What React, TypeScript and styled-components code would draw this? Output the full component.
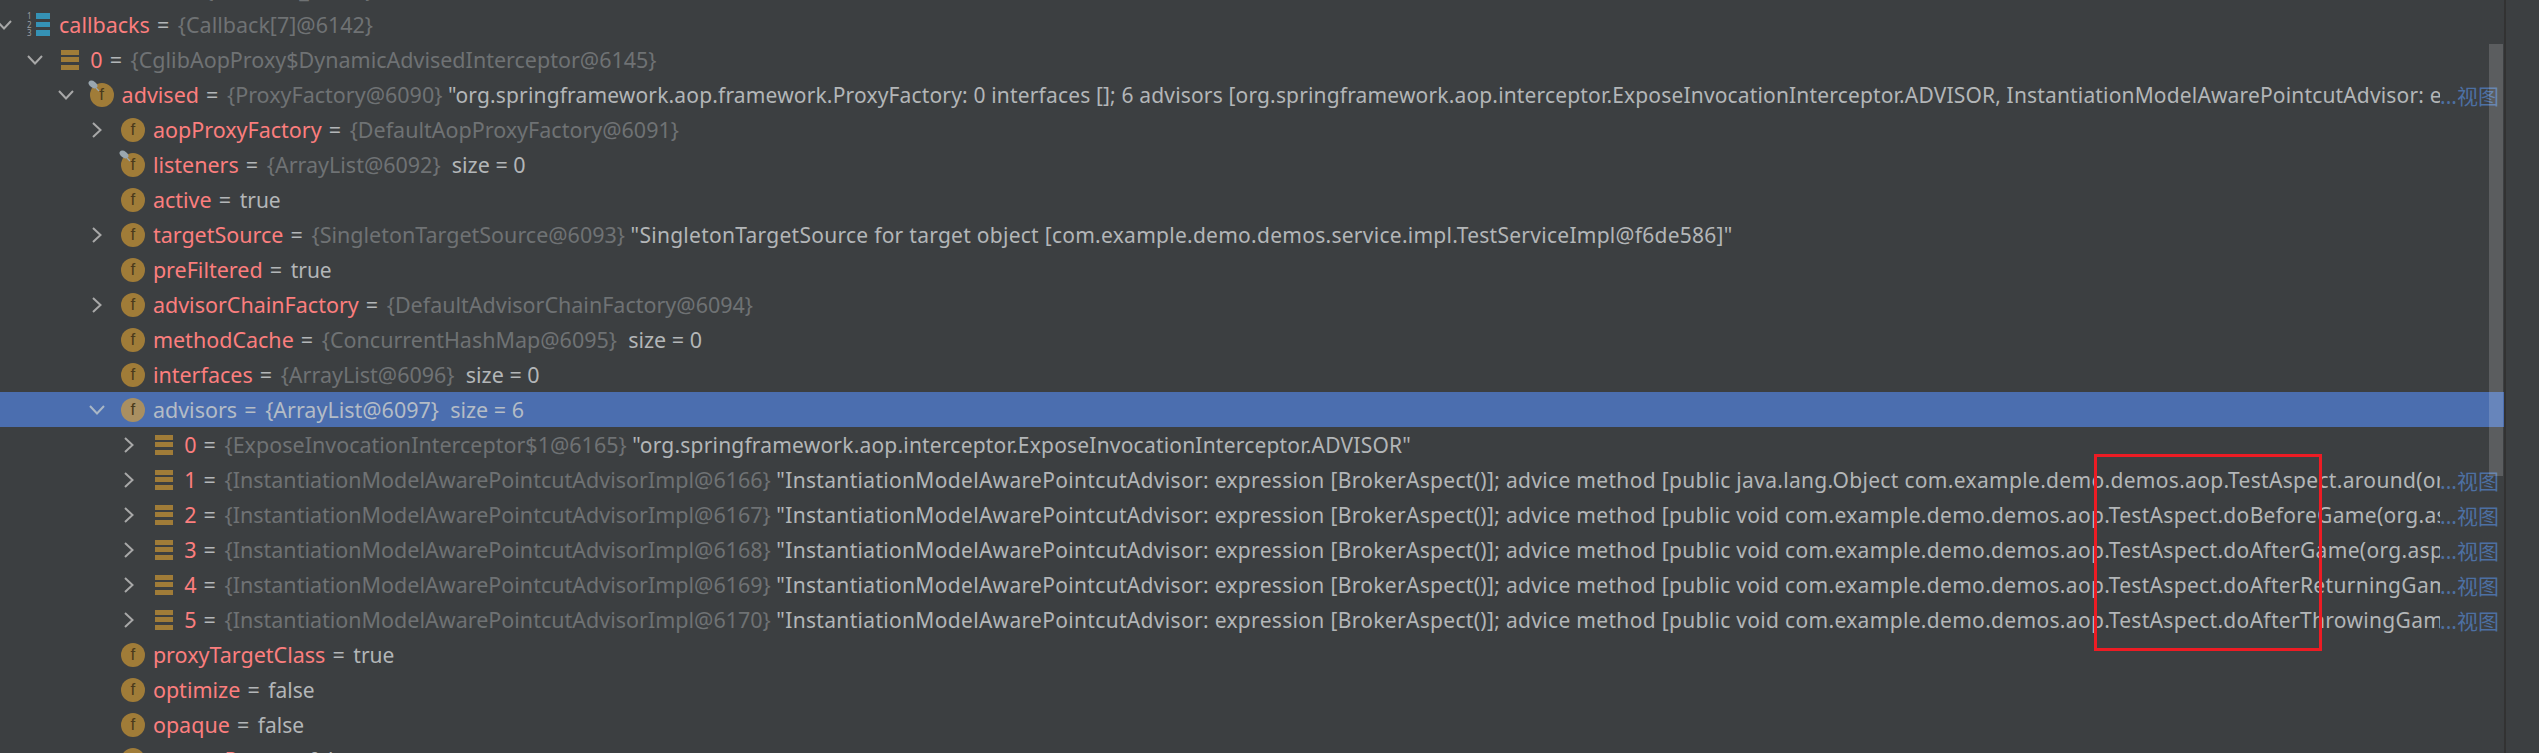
import React from 'react';
import styled, { createGlobalStyle } from 'styled-components';

const GlobalStyle = createGlobalStyle`
  html, body {
    margin: 0;
    padding: 0;
    background: #3c3f41;
    overflow: hidden;
  }
`;

const Page = styled.div`
  display: flex;
  width: 2539px;
  height: 753px;
  overflow: hidden;
  background: #3c3f41;
`;

const TreePanel = styled.div`
  position: relative;
  width: 2504px;
  height: 753px;
  flex: none;
  overflow: hidden;
`;

const Tree = styled.div`
  display: flex;
  flex-direction: column;
  margin-top: -28px;
  margin-left: -8px;
  font-family: 'Noto Sans', 'Noto Sans CJK SC', sans-serif;
  font-size: 21.5px;
`;

const SidePanel = styled.div`
  flex: 1;
  border-left: 2px solid #323232;
  background: #3c3f41;
`;

const ScrollThumb = styled.div`
  position: absolute;
  left: 2489px;
  top: 44px;
  width: 14px;
  height: 432px;
  background: rgba(255, 255, 255, 0.16);
`;

const Row = styled.div<{ $level: number; $selected?: boolean }>`
  display: flex;
  align-items: center;
  height: 35px;
  flex: none;
  padding-left: ${(p) => p.$level * 31.3}px;
  background: ${(p) => (p.$selected ? '#4b6eaf' : 'transparent')};
`;

const ChevronSlot = styled.span`
  display: flex;
  align-items: center;
  justify-content: center;
  width: 23px;
  height: 100%;
  margin-right: 12px;
  flex: none;
`;

const IconBox = styled.span`
  position: relative;
  display: flex;
  align-items: center;
  justify-content: center;
  width: 24px;
  height: 24px;
  margin-right: 8px;
  flex: none;
`;

const FieldCircle = styled.span<{ $selected?: boolean }>`
  display: flex;
  align-items: center;
  justify-content: center;
  width: 24px;
  height: 24px;
  border-radius: 50%;
  background: ${(p) => (p.$selected ? '#a98f61' : '#a07c38')};
  color: #4a3a1c;
  font-family: 'Liberation Sans', sans-serif;
  font-size: 17px;
  line-height: 24px;
`;

const Pin = styled.svg`
  position: absolute;
  left: -2px;
  top: -3px;
`;

const StackBars = styled.span`
  display: flex;
  flex-direction: column;
  gap: 2.5px;
  width: 18px;
`;

const StackBar = styled.span`
  display: block;
  height: 5px;
  background: #a07c38;
`;

const ListIcon = styled.span`
  display: grid;
  grid-template-columns: 9px 14px;
  grid-auto-rows: 8.5px;
  align-items: center;
  width: 24px;
`;

const ListDigit = styled.span`
  font-size: 8px;
  line-height: 8px;
  color: #9a9da0;
`;

const ListBar = styled.span`
  display: block;
  height: 5.5px;
  background: #3592b5;
`;

const Content = styled.span`
  flex: 0 1 auto;
  min-width: 0;
  overflow: hidden;
  white-space: pre;
`;

const Name = styled.span<{ $selected?: boolean }>`
  color: ${(p) => (p.$selected ? '#b4bcc6' : '#fb7e7e')};
`;

const Equals = styled.span<{ $selected?: boolean }>`
  color: ${(p) => (p.$selected ? '#b4bcc6' : '#b3b6b8')};
  letter-spacing: 1.5px;
`;

const Size = styled.span<{ $selected?: boolean }>`
  color: ${(p) => (p.$selected ? '#b4bcc6' : '#b3b6b8')};
`;

const TypeRef = styled.span<{ $selected?: boolean }>`
  color: ${(p) => (p.$selected ? '#b4bcc6' : '#6f7274')};
`;

const Value = styled.span<{ $tracking?: number }>`
  color: #b3b6b8;
  font-size: 21px;
  letter-spacing: ${(p) => p.$tracking ?? 0}px;
`;

const ViewLink = styled.span`
  flex: none;
  width: 64px;
  color: #4d70a3;
  font-size: 21px;
  white-space: pre;
`;

const RedFrame = styled.div`
  position: absolute;
  left: 2094px;
  top: 454px;
  width: 228px;
  height: 197px;
  box-sizing: border-box;
  border: 3px solid #ed1c24;
`;

type Kind = 'list' | 'stack' | 'field' | 'watched';

type Item = {
  level: number;
  open?: boolean;
  chevron?: boolean;
  kind: Kind;
  name: string;
  type?: string;
  value?: string;
  tracking?: number;
  size?: number;
  link?: boolean;
  selected?: boolean;
};

const pointcut = 'InstantiationModelAwarePointcutAdvisor: expression [BrokerAspect()]; advice method';
const pkg = 'com.example.demo.demos.aop.TestAspect';

const advisorRow = (name: string, id: number, method: string): Item => ({
  level: 4,
  chevron: true,
  kind: 'stack',
  name,
  type: `{InstantiationModelAwarePointcutAdvisorImpl@${id}}`,
  value: `"${pointcut} [${method}]"`,
  tracking: 0.32,
  link: true,
});

const items: Item[] = [
  { level: 0, kind: 'stack', name: 'hiddenField', type: '{Advisors_@614}' },
  { level: 0, open: true, chevron: true, kind: 'list', name: 'callbacks', type: '{Callback[7]@6142}' },
  { level: 1, open: true, chevron: true, kind: 'stack', name: '0', type: '{CglibAopProxy$DynamicAdvisedInterceptor@6145}' },
  {
    level: 2,
    open: true,
    chevron: true,
    kind: 'watched',
    name: 'advised',
    type: '{ProxyFactory@6090}',
    value:
      '"org.springframework.aop.framework.ProxyFactory: 0 interfaces []; 6 advisors [org.springframework.aop.interceptor.ExposeInvocationInterceptor.ADVISOR, InstantiationModelAwarePointcutAdvisor: expression [BrokerAspect()]; advice method"',
    tracking: 0.16,
    link: true,
  },
  { level: 3, chevron: true, kind: 'field', name: 'aopProxyFactory', type: '{DefaultAopProxyFactory@6091}' },
  { level: 3, kind: 'watched', name: 'listeners', type: '{ArrayList@6092}', size: 0 },
  { level: 3, kind: 'field', name: 'active', value: 'true' },
  {
    level: 3,
    chevron: true,
    kind: 'field',
    name: 'targetSource',
    type: '{SingletonTargetSource@6093}',
    value: '"SingletonTargetSource for target object [com.example.demo.demos.service.impl.TestServiceImpl@f6de586]"',
    tracking: 0.27,
  },
  { level: 3, kind: 'field', name: 'preFiltered', value: 'true' },
  { level: 3, chevron: true, kind: 'field', name: 'advisorChainFactory', type: '{DefaultAdvisorChainFactory@6094}' },
  { level: 3, kind: 'field', name: 'methodCache', type: '{ConcurrentHashMap@6095}', size: 0 },
  { level: 3, kind: 'field', name: 'interfaces', type: '{ArrayList@6096}', size: 0 },
  { level: 3, open: true, chevron: true, kind: 'field', name: 'advisors', type: '{ArrayList@6097}', size: 6, selected: true },
  {
    level: 4,
    chevron: true,
    kind: 'stack',
    name: '0',
    type: '{ExposeInvocationInterceptor$1@6165}',
    value: '"org.springframework.aop.interceptor.ExposeInvocationInterceptor.ADVISOR"',
    tracking: 0.2,
  },
  advisorRow('1', 6166, `public java.lang.Object ${pkg}.around(org.aspectj.lang.ProceedingJoinPoint)`),
  advisorRow('2', 6167, `public void ${pkg}.doBeforeGame(org.aspectj.lang.JoinPoint)`),
  advisorRow('3', 6168, `public void ${pkg}.doAfterGame(org.aspectj.lang.JoinPoint)`),
  advisorRow('4', 6169, `public void ${pkg}.doAfterReturningGame(org.aspectj.lang.JoinPoint)`),
  advisorRow('5', 6170, `public void ${pkg}.doAfterThrowingGame(org.aspectj.lang.JoinPoint)`),
  { level: 3, kind: 'field', name: 'proxyTargetClass', value: 'true' },
  { level: 3, kind: 'field', name: 'optimize', value: 'false' },
  { level: 3, kind: 'field', name: 'opaque', value: 'false' },
  { level: 3, kind: 'field', name: 'exposeProxy', value: 'false' },
];

const Chevron = ({ open, selected }: { open?: boolean; selected?: boolean }) => (
  <svg width="16" height="16" viewBox="0 0 16 16" fill="none" stroke={selected ? '#a9b7c6' : '#a8a8a8'} strokeWidth="2">
    <path d={open ? 'M1 4l7 7.5L15 4' : 'M4 1l7.5 7L4 15'} />
  </svg>
);

const RowIcon = ({ kind, selected }: { kind: Kind; selected?: boolean }) => {
  if (kind === 'list') {
    return (
      <ListIcon>
        {[1, 2, 3].map((n) => (
          <React.Fragment key={n}>
            <ListDigit>{n}</ListDigit>
            <ListBar />
          </React.Fragment>
        ))}
      </ListIcon>
    );
  }
  if (kind === 'stack') {
    return (
      <StackBars>
        <StackBar />
        <StackBar />
        <StackBar />
      </StackBars>
    );
  }
  return (
    <>
      <FieldCircle $selected={selected}>f</FieldCircle>
      {kind === 'watched' && (
        <Pin width="12" height="12" viewBox="0 0 12 12">
          <ellipse cx="5" cy="4.5" rx="5" ry="3.2" transform="rotate(35 5 4.5)" fill="#9aa7b0" />
          <path d="M8 8l3 3" stroke="#9aa7b0" strokeWidth="1.2" />
        </Pin>
      )}
    </>
  );
};

const TreeRow = ({ item }: { item: Item }) => {
  const { level, open, chevron, kind, name, type, value, tracking, size, link, selected } = item;
  return (
    <Row $level={level} $selected={selected}>
      <ChevronSlot>{chevron && <Chevron open={open} selected={selected} />}</ChevronSlot>
      <IconBox>
        <RowIcon kind={kind} selected={selected} />
      </IconBox>
      <Content>
        <Name $selected={selected}>{name}</Name>
        <Equals $selected={selected}> = </Equals>
        {type && <TypeRef $selected={selected}>{type}</TypeRef>}
        {size !== undefined && <Size $selected={selected}>{`  size = ${size}`}</Size>}
        {type && value && <Size> </Size>}
        {value && <Value $tracking={tracking}>{value}</Value>}
      </Content>
      {link && <ViewLink>...视图</ViewLink>}
    </Row>
  );
};

export default function App() {
  return (
    <Page>
      <GlobalStyle />
      <TreePanel>
        <Tree>
          {items.map((item, i) => (
            <TreeRow key={i} item={item} />
          ))}
        </Tree>
        <ScrollThumb />
        <RedFrame />
      </TreePanel>
      <SidePanel />
    </Page>
  );
}
